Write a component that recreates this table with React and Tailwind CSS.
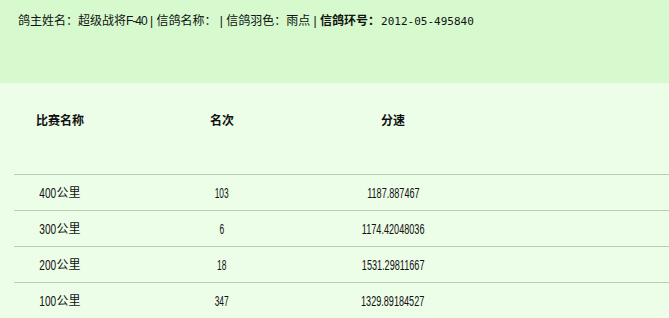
import React from 'react';

const rows = [
  { km: '400', rank: '103', speed: '1187.887467' },
  { km: '300', rank: '6', speed: '1174.42048036' },
  { km: '200', rank: '18', speed: '1531.29811667' },
  { km: '100', rank: '347', speed: '1329.89184527' },
];

const cjk = "font-['Liberation_Sans','Noto_Sans_CJK_SC',sans-serif]";

const App = () => {
  return (
    <div className={`w-[669px] h-[318px] overflow-hidden bg-[#ecfde8] text-[#111] ${cjk}`}>
      {/* Pigeon info */}
      <div className="h-[83px] bg-[#d6f9ce] pl-[18px] pt-[14px] text-[12px] leading-[14px] whitespace-nowrap">
        鸽主姓名：超级战将<span className="tracking-[-1px]">F-40</span> | 信鸽名称： | 信鸽羽色：雨点 |{' '}
        <span className="font-bold">信鸽环号：</span>
        <span className="font-['DejaVu_Sans_Mono',monospace] text-[11px] ml-[1px]">2012-05-495840</span>
      </div>

      {/* Race results */}
      <div className="ml-[14px]">
        <div className="grid grid-cols-[92px_232px_110px_1fr] h-[91px] pt-[31px] text-[12px] leading-[14px] font-bold">
          <div className="text-center">比赛名称</div>
          <div className="text-center">名次</div>
          <div className="text-center">分速</div>
          <div />
        </div>
        {rows.map((r) => (
          <div
            key={r.km}
            className="grid grid-cols-[92px_232px_110px_1fr] h-[36px] items-center border-t border-[#b8cfb2] text-[14px] leading-[16px]"
          >
            <div className="flex justify-center items-center">
              <span className="flex w-[17px] justify-center">
                <span className="inline-block scale-x-[0.72]">{r.km}</span>
              </span>
              <span className="text-[12px]">公里</span>
            </div>
            <div className="flex justify-center">
              <span className="inline-block scale-x-[0.6]">{r.rank}</span>
            </div>
            <div className="flex justify-center">
              <span className="inline-block scale-x-[0.65]">{r.speed}</span>
            </div>
            <div />
          </div>
        ))}
      </div>
    </div>
  );
};

export default App;
